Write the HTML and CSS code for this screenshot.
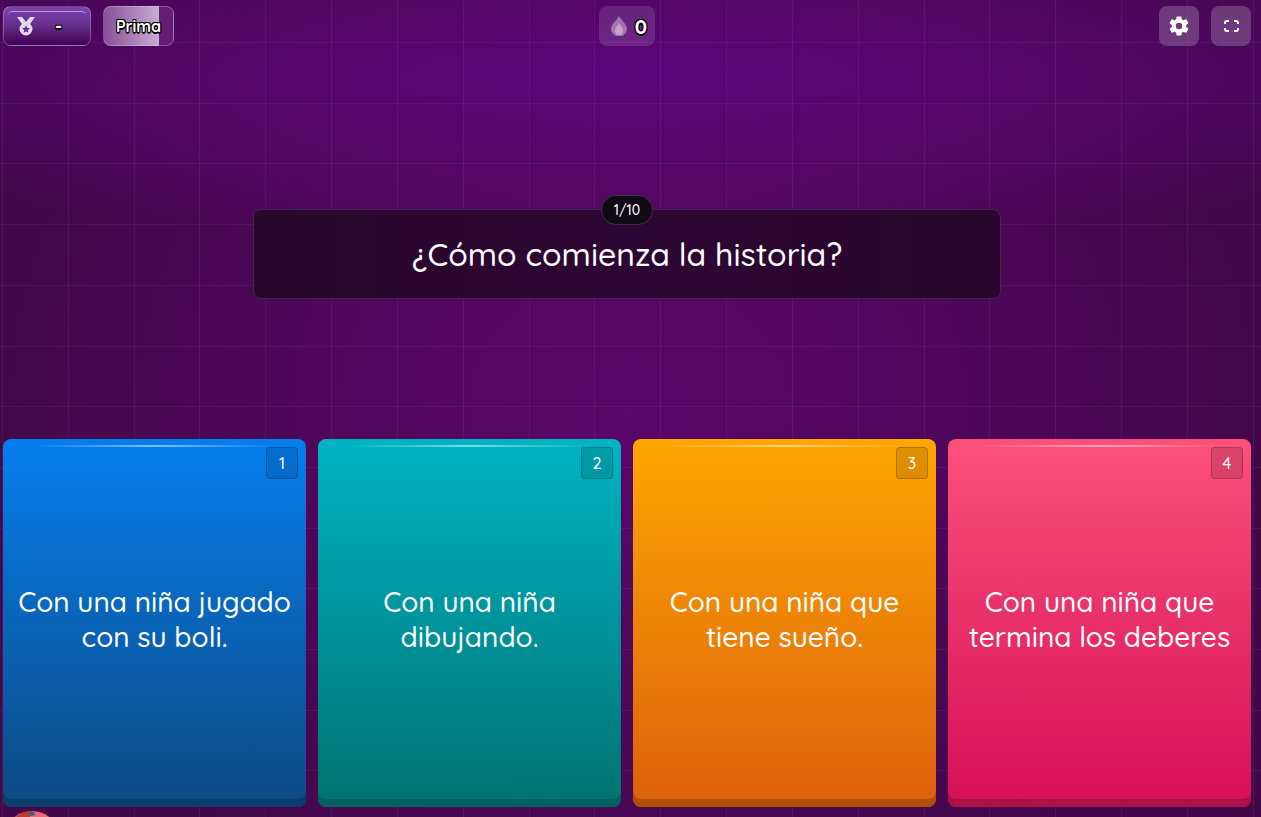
FILE: index.html
```html
<!DOCTYPE html>
<html lang="es">
<head>
    <meta charset="UTF-8">
    <meta name="viewport" content="width=device-width, initial-scale=1.0">
    <title>Quiz</title>
    <link rel="stylesheet" href="styles.css">
</head>
<body>
    <div class="game">
        <header class="topbar">
            <div class="topbar-left">
                <button class="rank-btn" aria-label="Rank">
                    <svg viewBox="0 0 18 19">
                        <path d="M0 0h5l4 5 4-5h5l-5 7H5z"/>
                        <path fill-rule="evenodd" d="M9 5.500a6.500 6.500 0 1 0 0 13a6.500 6.500 0 0 0 0-13zm0 3a3.500 3.500 0 1 1 0 7a3.500 3.500 0 0 1 0-7z"/>
                        <path class="medal-core" d="M9 8a4 4 0 1 0 0 8a4 4 0 0 0 0-8z"/>
                        <path class="medal-star" d="M9 8.500l1.200 2.300 2.600.4-1.900 1.800.5 2.600L9 14.400l-2.400 1.200.5-2.600-1.900-1.800 2.600-.4z"/>
                    </svg>
                    <span>-</span>
                </button>
                <div class="bonus">Prima</div>
            </div>
            <div class="streak">
                <svg viewBox="0 0 16 20">
                    <path class="flame-outer" d="M8 0C10 4 16 8 16 13a8 7.500 0 0 1-16 0C0 8 6 4 8 0z"/>
                    <path class="flame-inner" d="M8 7c1 2.500 4 4.500 4 8a4 4 0 0 1-8 0c0-3.500 3-5.500 4-8z"/>
                </svg>
                <span>0</span>
            </div>
            <div class="topbar-right">
                <button class="icon-btn" aria-label="Settings">
                    <svg class="gear" viewBox="2 2 20 20">
                        <path d="M19.140 12.940c.04-.3.060-.61.060-.94s-.02-.64-.07-.94l2.030-1.580c.18-.14.230-.41.120-.61l-1.920-3.320c-.12-.22-.37-.29-.59-.22l-2.390.96c-.5-.38-1.030-.7-1.620-.94L14.400 2.810c-.04-.24-.24-.41-.48-.41h-3.840c-.24 0-.43.170-.47.410L9.250 5.350c-.59.240-1.130.570-1.620.940L5.240 5.330c-.22-.08-.47 0-.59.220L2.740 8.870c-.12.210-.08.470.120.610l2.030 1.580c-.05.3-.09.630-.09.940s.02.640.070.940l-2.030 1.580c-.18.140-.23.410-.12.610l1.920 3.320c.12.220.37.290.59.220l2.390-.96c.5.380 1.030.7 1.620.940l.36 2.540c.05.240.24.410.48.410h3.840c.24 0 .44-.17.470-.41l.36-2.540c.59-.24 1.130-.56 1.620-.94l2.390.96c.22.080.47 0 .59-.22l1.920-3.320c.12-.22.070-.47-.12-.61zM12 15.200a3.200 3.200 0 1 1 0-6.400 3.200 3.200 0 0 1 0 6.400z"/>
                    </svg>
                </button>
                <button class="icon-btn" aria-label="Fullscreen">
                    <svg class="expand" viewBox="0 0 16 12">
                        <path d="M6 1H4q-2 0-2 2v1M11 1h2q2 0 2 2v1M6 11H4q-2 0-2-2V8M11 11h2q2 0 2-2V8"/>
                    </svg>
                </button>
            </div>
        </header>

        <main class="question-area">
            <section class="question">
                <span class="counter">1/10</span>
                <h1>¿Cómo comienza la historia?</h1>
            </section>
        </main>

        <div class="answers">
            <button class="answer blue">
                <span class="key">1</span>
                Con una niña jugado con su boli.
            </button>
            <button class="answer teal">
                <span class="key">2</span>
                Con una niña dibujando.
            </button>
            <button class="answer orange">
                <span class="key">3</span>
                Con una niña que tiene sueño.
            </button>
            <button class="answer pink">
                <span class="key">4</span>
                Con una niña que termina los deberes
            </button>
        </div>

        <footer class="players">
            <svg class="avatar" viewBox="0 0 40 40">
                <ellipse cx="20" cy="20" rx="24" ry="20" fill="#e66a78"/>
                <path d="M20 0C8 0-2 8-4 20h14L20 2z" fill="#b63c32"/>
                <path d="M17 1h5l1 3-4 1z" fill="#23658c"/>
            </svg>
        </footer>
    </div>
</body>
</html>
```

FILE: styles.css
```css
* {
    margin: 0;
    padding: 0;
    box-sizing: border-box;
}

body {
    font-family: Quicksand, Lato, sans-serif;
    font-weight: 500;
    color: #fff;
    overflow: hidden;
}

button {
    font: inherit;
    color: inherit;
    border: none;
    cursor: pointer;
}

.game {
    height: 100vh;
    display: flex;
    flex-direction: column;
    padding: 6px 10px 0 3px;
    /* grid lines on top of the purple glow */
    background:
        repeating-linear-gradient(90deg, transparent 0 2px, rgba(255, 255, 255, 0.05) 2px 3px, transparent 3px 5.22%),
        repeating-linear-gradient(180deg, transparent 0 42px, rgba(255, 255, 255, 0.05) 42px 43px, transparent 43px 7.43%),
        radial-gradient(ellipse 85% 20% at 50% 9%, rgba(96, 6, 130, 0.8), transparent),
        radial-gradient(ellipse 52% 70% at 50% 50%, #5a066a, #420849);
}

.topbar {
    display: grid;
    grid-template-columns: 1fr auto 1fr;
    align-items: center;
}

.topbar-left,
.topbar-right {
    display: flex;
    gap: 12px;
}

.topbar-right {
    justify-content: flex-end;
}

.rank-btn,
.bonus,
.streak,
.icon-btn {
    height: 40px;
    border-radius: 8px;
    display: flex;
    align-items: center;
}

.rank-btn,
.bonus,
.streak {
    font-weight: 700;
    text-shadow: -1px -1px 0 #000, 1px -1px 0 #000, -1px 1px 0 #000, 1px 1px 0 #000, 0 2px 0 #000;
}

.rank-btn {
    position: relative;
    width: 88px;
    padding: 0 13px;
    gap: 20px;
    font-size: 18px;
    border: 1px solid rgba(255, 255, 255, 0.25);
    background: linear-gradient(#7d43b0, #66308f 45%, #43004f);
}

.rank-btn::before {
    content: "";
    position: absolute;
    top: 4px;
    left: 4px;
    right: 4px;
    height: 8px;
    border-top: 1px solid rgba(255, 255, 255, 0.5);
    border-radius: 6px;
}

.rank-btn svg {
    width: 18px;
    height: 19px;
    fill: #e6d9ee;
}

.rank-btn .medal-star {
    fill: #66308f;
}

.bonus {
    width: 71px;
    justify-content: center;
    font-size: 16px;
    border: 1px solid rgba(255, 255, 255, 0.25);
    background: linear-gradient(90deg, #885099, #c7acd0 79%, #631d76 79%);
}

.streak {
    padding: 0 8px 0 12px;
    gap: 8px;
    font-size: 20px;
    background: rgba(255, 255, 255, 0.12);
}

.streak svg {
    width: 16px;
    height: 20px;
}

.flame-outer {
    fill: #a473b3;
}

.flame-inner {
    fill: #c5a3ce;
}

.icon-btn {
    width: 40px;
    justify-content: center;
    background: rgba(255, 255, 255, 0.2);
}

.gear {
    width: 20px;
    height: 20px;
    fill: #fff;
}

.expand {
    width: 16px;
    height: 12px;
    fill: none;
    stroke: #fff;
    stroke-width: 2;
}

.question-area {
    flex: 1;
    display: flex;
    align-items: center;
    justify-content: center;
    padding-top: 22px;
}

.question {
    position: relative;
    width: 60%;
    min-height: 90px;
    padding: 16px;
    display: flex;
    align-items: center;
    justify-content: center;
    border: 1px solid #43254a;
    border-radius: 8px;
    background: linear-gradient(90deg, #2a082d, #2d0733 50%, #2a082d);
}

.question h1 {
    font-size: 32px;
    line-height: 40px;
    font-weight: 500;
    text-align: center;
}

.counter {
    position: absolute;
    top: -15px;
    left: 50%;
    transform: translateX(-50%);
    width: 52px;
    line-height: 28px;
    font-size: 14px;
    text-align: center;
    border: 1px solid #3d3540;
    border-radius: 16px;
    background: #110914;
}

.answers {
    height: 45vh;
    display: grid;
    grid-template-columns: repeat(4, 1fr);
    gap: 12px;
}

.answer {
    position: relative;
    padding: 0 12px 8px;
    font-size: 28px;
    line-height: 35px;
    text-align: center;
    border-radius: 8px;
    overflow: hidden;
}

/* shiny line near the top edge */
.answer::before {
    content: "";
    position: absolute;
    top: 6px;
    left: 10%;
    right: 10%;
    height: 2px;
    background: linear-gradient(90deg, transparent, rgba(255, 255, 255, 0.5), transparent);
}

/* darker strip at the bottom */
.answer::after {
    content: "";
    position: absolute;
    inset: 0;
    border-radius: 8px;
    box-shadow: inset 0 -8px 0 var(--edge);
}

.blue {
    --edge: #0a3d6b;
    background: linear-gradient(#057eee, #0e4a82);
}

.teal {
    --edge: #005f5f;
    background: linear-gradient(#00b4c4, #007272);
}

.orange {
    --edge: #af4f0a;
    background: linear-gradient(#ffa602, #db600c);
}

.pink {
    --edge: #ac1247;
    background: linear-gradient(#fb517a, #d60e57);
}

.key {
    position: absolute;
    top: 8px;
    right: 8px;
    width: 32px;
    height: 32px;
    font-size: 16px;
    line-height: 30px;
    border: 1px solid rgba(0, 0, 0, 0.2);
    border-radius: 4px;
    background: rgba(0, 0, 0, 0.12);
}

.players {
    height: 10px;
    padding: 4px 0 0 9px;
}

.avatar {
    display: block;
    width: 40px;
    height: 40px;
    overflow: visible;
}
```
